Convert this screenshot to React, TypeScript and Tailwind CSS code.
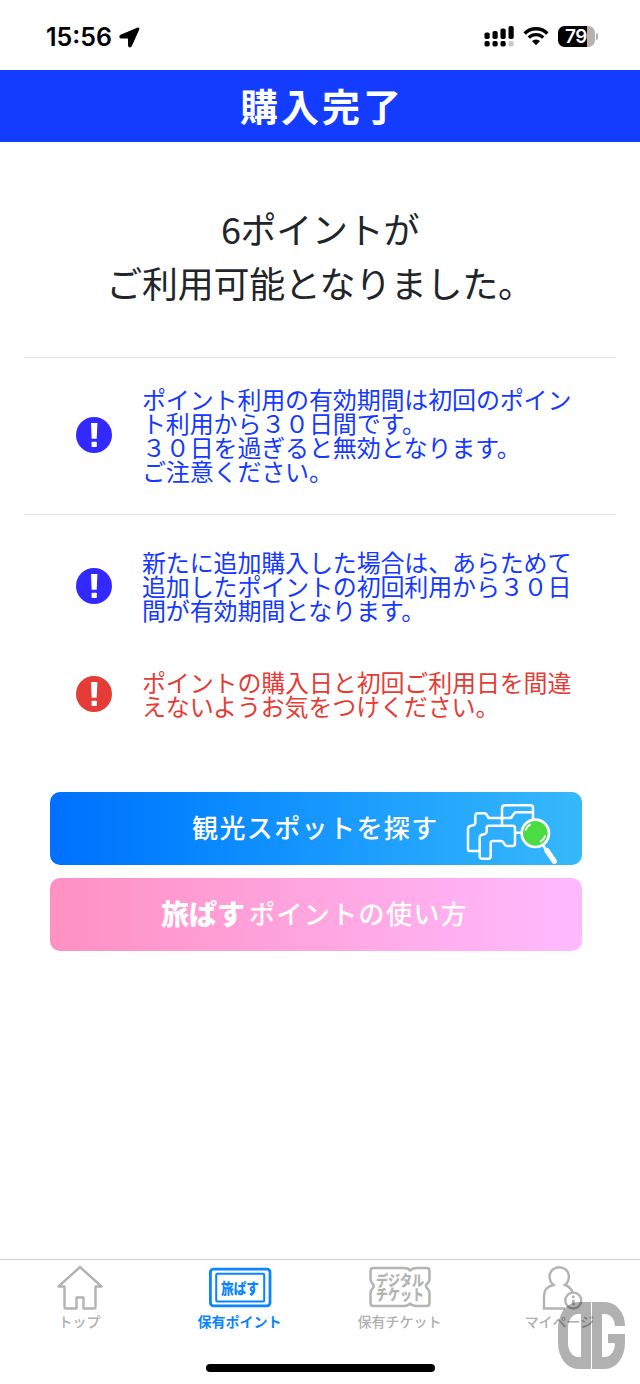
import React from "react";
import clsx from "clsx";

const notices = [
  {
    lines: [
      "ポイント利用の有効期間は初回のポイン",
      "ト利用から３０日間です。",
      "３０日を過ぎると無効となります。",
      "ご注意ください。",
    ],
    danger: false,
  },
  {
    lines: [
      "新たに追加購入した場合は、あらためて",
      "追加したポイントの初回利用から３０日",
      "間が有効期間となります。",
    ],
    danger: false,
  },
  {
    lines: [
      "ポイントの購入日と初回ご利用日を間違",
      "えないようお気をつけください。",
    ],
    danger: true,
  },
];

function StatusBar() {
  return (
    <div className="flex h-[70px] items-start justify-between pt-[26px] pr-[42px] pl-[46px]">
      <div className="flex items-center gap-[7px]">
        <span className="pt-px font-['Inter'] text-[25px] leading-[21px] font-semibold text-black">
          15:56
        </span>
        <svg width="21" height="21" viewBox="0 0 21 21">
          <path
            d="M18.400 1.200 1.800 8.300c-1.400.7-1 2.600.3 2.600l7.500.1.1 7.600c0 1.400 1.800 1.700 2.500.4L19.700 2.300c.4-.9-.4-1.500-1.300-1.100z"
            fill="#000"
            stroke="#000"
            strokeWidth="1.200"
            strokeLinejoin="round"
          />
        </svg>
      </div>
      <div className="flex items-start">
        <svg width="30" height="21" viewBox="0 0 30 21">
          <rect x="0.500" y="6.500" width="5.200" height="6.500" rx="1.800" />
          <rect x="8.500" y="5" width="5.200" height="8" rx="1.800" />
          <rect x="16.500" y="2.500" width="5.200" height="10.500" rx="1.800" />
          <rect x="24.500" y="0" width="5.200" height="13" rx="1.800" />
          <rect x="0.500" y="15" width="5.200" height="5.500" rx="1.800" />
          <rect x="8.500" y="15" width="5.200" height="5.500" rx="1.800" />
          <rect x="16.500" y="15" width="5.200" height="5.500" rx="1.800" />
          <rect x="24.500" y="15" width="5.200" height="5.500" rx="1.800" fill="#c8c8c8" />
        </svg>
        <svg className="ml-[9px]" width="26" height="20" viewBox="0 0 26 20">
          <g fill="none" stroke="#000" strokeWidth="3.300">
            <path d="M1.600 7.500a16 16 0 0 1 22.800 0" />
            <path d="M5.800 11.700a10.200 10.200 0 0 1 14.400 0" />
          </g>
          <path d="M13 19.300l4-4.200a5.800 5.800 0 0 0-8 0z" />
        </svg>
        <div className="ml-[9px] flex h-[21px] w-[37px] items-center overflow-hidden rounded-[6.500px] bg-[linear-gradient(90deg,#000_79%,#b3b3b3_79%)] pl-[7px]">
          <span className="font-['Inter'] text-[19px] leading-[21px] font-semibold tracking-[-0.500px] text-white">
            79
          </span>
        </div>
        <div className="mt-[7px] ml-[1px] h-[7px] w-[2px] rounded-r-full bg-[#b3b3b3]" />
      </div>
    </div>
  );
}

function Notice({ lines, danger }: { lines: string[]; danger: boolean }) {
  return (
    <div
      className={clsx(
        "flex items-center pl-[52px] text-2xl leading-6",
        danger ? "text-[#e43c36]" : "text-[#1539ff]"
      )}
    >
      <svg className="mr-[30px] mb-px shrink-0" width="36" height="36" viewBox="0 0 36 36">
        <circle cx="18" cy="18" r="18" fill={danger ? "#e43c36" : "#3329ff"} />
        <path d="M15 6h6.400l-.7 15.800h-5z" fill="#fff" />
        <rect x="15.600" y="24.800" width="5.200" height="5.200" rx="0.800" fill="#fff" />
      </svg>
      <p className="whitespace-nowrap tracking-[-0.150px]">
        {lines.map((line) => (
          <span key={line} className="block">
            {line}
          </span>
        ))}
      </p>
    </div>
  );
}

function MapSearchIcon() {
  return (
    <svg
      className="absolute top-[-2px] left-[410px]"
      width="122"
      height="75"
      viewBox="0 0 366 225"
    >
      <g
        fill="none"
        stroke="#fff"
        strokeWidth="7.500"
        strokeLinecap="round"
        strokeLinejoin="round"
      >
        <path d="M55 183H30q-6 0-6-6v-60q0-7 7-9l9-2q6-2 6-9V78q0-8 8-8h18q7 0 9 6l5 8h62q7 0 9-6l4-6q3-5 9-5h48" />
        <path d="M126 105V55q0-9 10-9h76q7 0 7 8v34" />
        <path d="M86 107h72q7 0 7 7v46q0 8-7 8h-16q-6 0-9-6l-2-4q-3-5-10-5H98q-6 0-6 7v38q0 8-7 8H66q-7 0-7-7v-56q0-7 7-9l8-2q6-2 6-8v-11q0-6 6-6z" />
        <path d="M165 128h20" />
      </g>
      <path d="M250 167l34 48" stroke="#fff" strokeWidth="8" strokeLinecap="round" />
      <path d="M261 182l22 32" stroke="#fff" strokeWidth="16" strokeLinecap="round" />
      <circle cx="226" cy="130" r="41" fill="#49dc43" stroke="#fff" strokeWidth="8" />
      <g fill="none" stroke="#fff" strokeWidth="6" strokeLinecap="round">
        <path d="M197 119q4-10 13-15" />
        <path d="M242 154q9-5 13-15" />
      </g>
    </svg>
  );
}

function HomeIcon() {
  return (
    <svg width="46" height="46" viewBox="0 0 46 46" fill="none" stroke="#b3b3b3" strokeWidth="2.400" strokeLinejoin="round">
      <path d="M23 2 44.500 21.500H38.500V42Q38.500 43.500 37 43.500H26.500V32.500H19.500V43.500H9Q7.500 43.500 7.500 42V21.500H1.500Z" />
    </svg>
  );
}

function PointIcon() {
  return (
    <svg width="64" height="46" viewBox="0 0 64 46">
      <rect x="2.400" y="4.200" width="59.600" height="36.600" rx="3" fill="none" stroke="#0a84ff" strokeWidth="2.800" />
      <rect x="8.200" y="8.800" width="48" height="27.800" rx="1" fill="none" stroke="#0a84ff" strokeWidth="2" />
      <text
        x="13"
        y="28.500"
        textLength="38"
        lengthAdjust="spacingAndGlyphs"
        className="fill-[#0a84ff] text-[15px] font-black"
      >
        旅ぱす
      </text>
    </svg>
  );
}

function TicketIcon() {
  return (
    <svg className="overflow-visible" width="64" height="46" viewBox="0 0 64 46">
      <path
        d="M5.500 3H36Q40.500 3 42 5.500Q44.500 3 48.500 3H58.500Q61.500 3 61.500 6V14Q61.500 17 58 20Q57.500 22 60.500 25Q61.500 26 61.500 28V38Q61.500 41 58.500 41H48.500Q44 41 42 38.500Q40 41 36 41H5.500Q2.500 41 2.500 38V28Q2.500 26 3.500 25Q6.500 22 5.500 20Q2.500 17 2.500 14V6Q2.500 3 5.500 3Z"
        fill="none"
        stroke="#b3b3b3"
        strokeWidth="2.500"
        strokeLinejoin="round"
      />
      <g className="fill-[#b3b3b3] text-[15px] font-black">
        <text x="8" y="20.500" textLength="48" lengthAdjust="spacingAndGlyphs">
          デジタル
        </text>
        <text x="8" y="35" textLength="48" lengthAdjust="spacingAndGlyphs">
          チケット
        </text>
      </g>
    </svg>
  );
}

function UserIcon() {
  return (
    <svg width="46" height="46" viewBox="0 0 46 46" fill="none" stroke="#b3b3b3" strokeWidth="2.400">
      <path d="M28 43.500H7V31Q7 22 16.500 20Q12.500 16.500 12.500 11A9.800 9.800 0 0 1 32 11Q32 16.500 28 20Q33 21.500 35.500 27" />
      <circle cx="36.300" cy="35.500" r="8" fill="#fff" />
      <circle cx="36.300" cy="31.800" r="1.500" fill="#b3b3b3" stroke="none" />
      <path d="M36.300 34.800v5.400" strokeWidth="2.800" />
    </svg>
  );
}

const tabs = [
  { label: "トップ", icon: <HomeIcon /> },
  { label: "保有ポイント", icon: <PointIcon />, active: true },
  { label: "保有チケット", icon: <TicketIcon /> },
  { label: "マイページ", icon: <UserIcon /> },
];

function TabBar() {
  return (
    <nav className="grid h-[125px] grid-cols-4 items-start border-t border-[#cfcfcf] pt-[5px]">
      {tabs.map((tab) => (
        <div key={tab.label} className="flex flex-col items-center">
          {tab.icon}
          <span
            className={clsx(
              "-ml-px text-sm leading-5 whitespace-nowrap",
              tab.active ? "font-bold text-[#0a84ff]" : "font-medium text-[#b0b0b0]"
            )}
          >
            {tab.label}
          </span>
        </div>
      ))}
    </nav>
  );
}

function Watermark() {
  return (
    <div className="absolute top-[1302px] left-[558px] flex h-[67px] gap-[1px] opacity-30">
      <div className="w-[33px] rounded-l-[20px_26px] border-x-[10px] border-y-[12px] border-black" />
      <div className="flex">
        <div className="w-[10px] bg-black" />
        <div className="flex w-[23px] flex-col justify-between">
          <div className="h-[24px] rounded-tr-[20px_24px] border-t-[12px] border-r-[10px] border-black" />
          <div className="flex h-[35px] flex-col rounded-br-[20px_26px] border-r-[10px] border-b-[12px] border-black">
            <div className="h-[9px] w-[7px] self-end bg-black" />
          </div>
        </div>
      </div>
    </div>
  );
}

export default function App() {
  return (
    <div
      lang="ja"
      className="relative flex h-[1384px] w-[640px] flex-col overflow-hidden bg-white font-['Noto_Sans_CJK_JP',sans-serif]"
    >
      <StatusBar />
      <header className="flex h-[72px] items-start justify-center bg-[#133cff]">
        <h1 className="pl-[4px] text-[38px] leading-[69px] font-bold tracking-[3px] text-white">
          購入完了
        </h1>
      </header>

      <main className="flex flex-1 flex-col px-6 pt-[59px]">
        <p className="text-center text-4xl leading-[54px] tracking-[-0.300px] text-[#212529]">
          6ポイントが
          <br />
          ご利用可能となりました。
        </p>

        <hr className="mt-[48px] border-[#dfdfdf]" />
        <div className="pt-[29px] pb-[31px]">
          <Notice {...notices[0]} />
        </div>
        <hr className="border-[#dfdfdf]" />
        <div className="flex flex-col gap-12 pt-[35px]">
          <Notice {...notices[1]} />
          <Notice {...notices[2]} />
        </div>

        <div className="mt-[74px] ml-[26px] flex w-[532px] flex-col gap-[13px] text-white">
          <button className="relative h-[73px] rounded-[10px] bg-linear-to-r from-[#0070ff] to-[#36b9fb] pb-[4px] pl-[142px] text-left">
            <span className="text-[26px] font-medium tracking-[1.400px]">観光スポットを探す</span>
            <MapSearchIcon />
          </button>
          <button className="flex h-[73px] items-center rounded-[10px] bg-linear-to-r from-[#ff90c2] to-[#ffbaff] pb-[4px] pl-[111px]">
            <span className="text-[28px] font-black">旅ぱす</span>
            <span className="ml-[4px] text-[26px] font-medium tracking-[1.400px]">
              ポイントの使い方
            </span>
          </button>
        </div>
      </main>

      <TabBar />
      <div className="absolute bottom-[12px] left-[206px] h-[8px] w-[229px] rounded-full bg-black" />
      <Watermark />
    </div>
  );
}
